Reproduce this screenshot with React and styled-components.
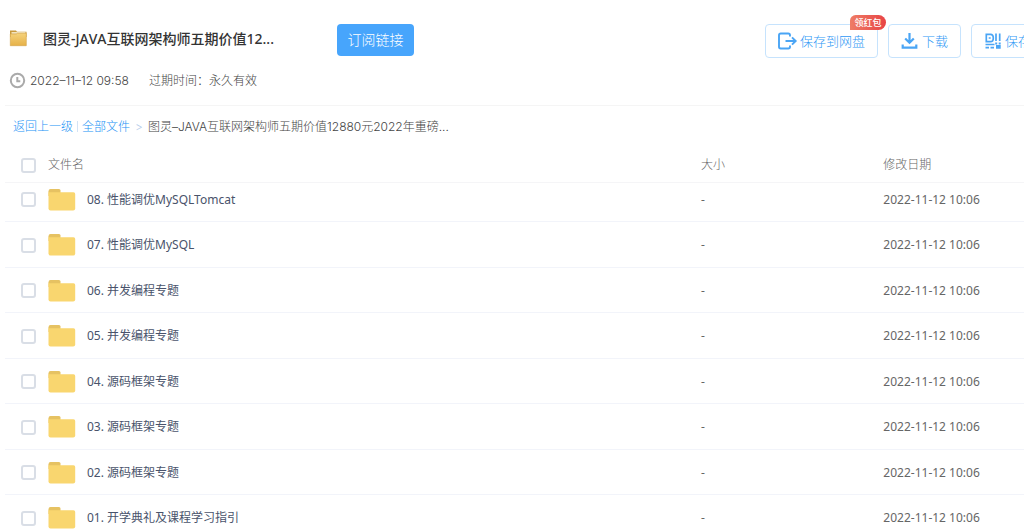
import React from "react";
import styled, { createGlobalStyle } from "styled-components";

const ui = `Inter, "Noto Sans CJK SC", sans-serif`;
const body = `"Noto Sans", "Noto Sans CJK SC", sans-serif`;

const GlobalStyle = createGlobalStyle`
  *, *::before, *::after { box-sizing: border-box; }
  html { scrollbar-width: none; }
  body { margin: 0; background: #fff; font: 12px/18px ${body}; color: #666; }
`;

const Page = styled.main`
  padding-left: 5px;
  overflow-x: clip;
`;

const Header = styled.header`
  padding-top: 24px;
  height: 106px;
  border-bottom: 1px solid #f5f5f5;
`;

const TitleBar = styled.div`
  display: flex;
  align-items: flex-start;
  height: 34px;
`;

const TitleGroup = styled.div`
  display: flex;
  align-items: center;
  flex: none;
  width: 332px;
  height: 30px;
  padding-left: 4px;
  gap: 15px;
`;

const Title = styled.h1`
  margin: 0;
  font: 500 14px/20px ${body};
  font-kerning: none;
  color: #333;
  white-space: nowrap;
`;

const Subscribe = styled.button`
  flex: none;
  width: 77px;
  height: 32px;
  padding: 0;
  border: 0;
  border-radius: 4px;
  background: #47a5fc;
  color: #fff;
  font: 300 14px/20px ${body};
`;

const Actions = styled.nav`
  display: flex;
  gap: 10px;
  width: 259px;
  margin-left: auto;
`;

const Action = styled.button`
  position: relative;
  display: flex;
  flex: none;
  align-items: center;
  justify-content: center;
  gap: ${(p) => p.$gap || 3}px;
  width: ${(p) => p.$width}px;
  height: 34px;
  padding: 0;
  border: 1px solid #c6e3fd;
  border-radius: 4px;
  background: #fff;
  color: #2f98f5;
  font: 300 13px/20px ${body};
  white-space: nowrap;
`;

const Badge = styled.span`
  position: absolute;
  top: -10px;
  right: -9px;
  width: 36px;
  height: 15px;
  border-radius: 6px 8px 8px 0;
  background: linear-gradient(90deg, #ee7c66, #e84445);
  color: #fff;
  font-size: 9px;
  font-weight: 500;
  line-height: 15px;
  text-align: center;
`;

const Meta = styled.div`
  display: flex;
  align-items: center;
  margin-top: 13px;
  padding-left: 4px;
  font-family: ${ui};
  font-weight: 300;
  color: #444;
`;

const MetaItem = styled.span`
  padding-top: 1px;
  margin-left: ${(p) => p.$space}px;
`;

const Crumbs = styled.nav`
  display: flex;
  align-items: center;
  height: 41px;
  padding-left: 8px;
  font-family: ${ui};
  font-weight: 300;
  color: #444;
`;

const CrumbLink = styled.a`
  color: #2493f5;
  text-decoration: none;
`;

const Divider = styled.span`
  width: 1px;
  height: 11px;
  margin: 0 4px;
  background: #d3e3f5;
`;

const Arrow = styled.span`
  margin: 0 5px;
  color: #b4ccea;
`;

const Table = styled.table`
  width: 100%;
  table-layout: fixed;
  border-collapse: separate;
  border-spacing: 0;
`;

const HeadCell = styled.th`
  width: ${(p) => p.$width || "auto"};
  height: 36px;
  padding: 1px 0 0 ${(p) => p.$inset || 0}px;
  border-bottom: 1px solid #f5f5f7;
  font-weight: 300;
  text-align: left;
  color: #666;
`;

const Row = styled.tr`
  height: 46px;
  &:nth-child(odd) { height: 45px; }
  &:first-child { height: 39px; }
  &:first-child > td { padding-bottom: 6px; }
`;

const Cell = styled.td`
  padding: 1px 0 0 ${(p) => p.$inset || 0}px;
  border-bottom: 1px solid #f2f4fa;
  color: #666;
`;

const NameLine = styled.div`
  display: flex;
  align-items: center;
  padding-left: 16px;
`;

const FileLabel = styled.label`
  display: flex;
  align-items: center;
  gap: 11px;
  margin-left: 12px;
  color: ${(p) => (p.$head ? "#666" : "#49536b")};
`;

const Check = styled.input`
  appearance: none;
  flex: none;
  width: 15px;
  height: 15px;
  margin: 0;
  border: 2px solid #d9dee6;
  border-radius: 3px;
  background: #fff;
  &:checked { background: #47a5fc; }
`;

const FolderIcon = () => (
  <svg width="28" height="24" viewBox="0 0 28 24" aria-hidden="true">
    <path d="M.5 8V3.200Q.5 1 2.500 1h8.500q1.500 0 1.500 1.500V8z" fill="#e6c262" />
    <path d="M.5 4.300h25q1.700 0 1.700 1.700v14.500q0 2-2 2H2.500q-2 0-2-2z" fill="#f9d66f" />
  </svg>
);

const TitleFolder = () => (
  <svg width="19" height="18" viewBox="0 0 19 18" aria-hidden="true">
    <defs>
      <linearGradient id="gold" x1="0" y1="0" x2="0" y2="1">
        <stop offset="0" stopColor="#f5d27b" />
        <stop offset="1" stopColor="#e6b148" />
      </linearGradient>
    </defs>
    <path d="M1 .5h6l1 1.200h9.500V7H1z" fill="#c99a3c" />
    <path d="M2.500 2.200h14v1.500h-14z" fill="#fdf6df" />
    <path d="M1.300 4h6l1-.8h9v12.500h-16z" fill="url(#gold)" stroke="#d3a247" strokeWidth=".6" />
  </svg>
);

const Clock = () => (
  <svg width="17" height="17" viewBox="0 0 17 17" fill="none" stroke="#aaa" aria-hidden="true">
    <circle cx="8.500" cy="8.500" r="6.700" strokeWidth="2" />
    <path d="M8.300 5v4.300h3" strokeWidth="2" />
  </svg>
);

const SaveIcon = () => (
  <svg width="20" height="18" viewBox="0 0 20 18" fill="none" stroke="#4aa5f5" strokeWidth="1.900" aria-hidden="true">
    <path d="M12 4.500V3.200q0-1.700-1.700-1.700H2.700Q1 1.500 1 3.200v11.600q0 1.700 1.700 1.700h7.600q1.700 0 1.700-1.700v-1.300" />
    <path d="M7.500 9h10.300M14 5.300 17.700 9 14 12.700" />
  </svg>
);

const DownloadIcon = () => (
  <svg width="17" height="18" viewBox="0 0 17 18" fill="none" stroke="#4aa5f5" strokeWidth="2.200" aria-hidden="true">
    <path d="M8.500 1v10M4.200 6.500l4.300 4.300 4.300-4.300M1.700 12.500v3.200h13.600v-3.200" />
  </svg>
);

const CodeIcon = () => (
  <svg width="16" height="16" viewBox="0 0 16 16" fill="none" stroke="#4aa5f5" strokeWidth="1.700" aria-hidden="true">
    <path d="M1.300 1.300h4.200q2.800 0 2.800 3.700t-2.800 3.700H1.300zM3.700 5h2M.5 11.500h9M11 .5v7.500M14.700.5v7.500M.5 14.700h3.500M5.500 14.700h3.500" />
    <path d="M10.200 9.500h2v2h-2zM13.700 9.500h2v2h-2zM11 12h4.700v3.700H11z" fill="#4aa5f5" stroke="none" />
  </svg>
);

const files = [
  "08. 性能调优MySQLTomcat",
  "07. 性能调优MySQL",
  "06. 并发编程专题",
  "05. 并发编程专题",
  "04. 源码框架专题",
  "03. 源码框架专题",
  "02. 源码框架专题",
  "01. 开学典礼及课程学习指引",
];

export default function App() {
  return (
    <Page>
      <GlobalStyle />
      <Header>
        <TitleBar>
          <TitleGroup>
            <TitleFolder />
            <Title>图灵-JAVA互联网架构师五期价值12...</Title>
          </TitleGroup>
          <Subscribe type="button">订阅链接</Subscribe>
          <Actions>
            <Action type="button" $width={113} $gap={2}>
              <SaveIcon />
              保存到网盘
              <Badge>领红包</Badge>
            </Action>
            <Action type="button" $width={73} $gap={4}>
              <DownloadIcon />
              下载
            </Action>
            <Action type="button" $width={113} $gap={4}>
              <CodeIcon />
              保存到手机
            </Action>
          </Actions>
        </TitleBar>
        <Meta>
          <Clock />
          <MetaItem $space={4}>2022–11–12 09:58</MetaItem>
          <MetaItem $space={20}>过期时间：永久有效</MetaItem>
        </Meta>
      </Header>
      <Crumbs>
        <CrumbLink href="#up">返回上一级</CrumbLink>
        <Divider />
        <CrumbLink href="#all">全部文件</CrumbLink>
        <Arrow>&gt;</Arrow>
        <span>图灵–JAVA互联网架构师五期价值12880元2022年重磅...</span>
      </Crumbs>
      <Table>
        <thead>
          <tr>
            <HeadCell>
              <NameLine>
                <Check type="checkbox" id="all" />
                <FileLabel htmlFor="all" $head>文件名</FileLabel>
              </NameLine>
            </HeadCell>
            <HeadCell $width="18%" $inset={3}>大小</HeadCell>
            <HeadCell $width="14%" $inset={2}>修改日期</HeadCell>
          </tr>
        </thead>
        <tbody>
          {files.map((name, i) => (
            <Row key={name}>
              <Cell>
                <NameLine>
                  <Check type="checkbox" id={`file-${i}`} />
                  <FileLabel htmlFor={`file-${i}`}>
                    <FolderIcon />
                    {name}
                  </FileLabel>
                </NameLine>
              </Cell>
              <Cell $inset={3}>-</Cell>
              <Cell $inset={2}>2022-11-12 10:06</Cell>
            </Row>
          ))}
        </tbody>
      </Table>
    </Page>
  );
}
